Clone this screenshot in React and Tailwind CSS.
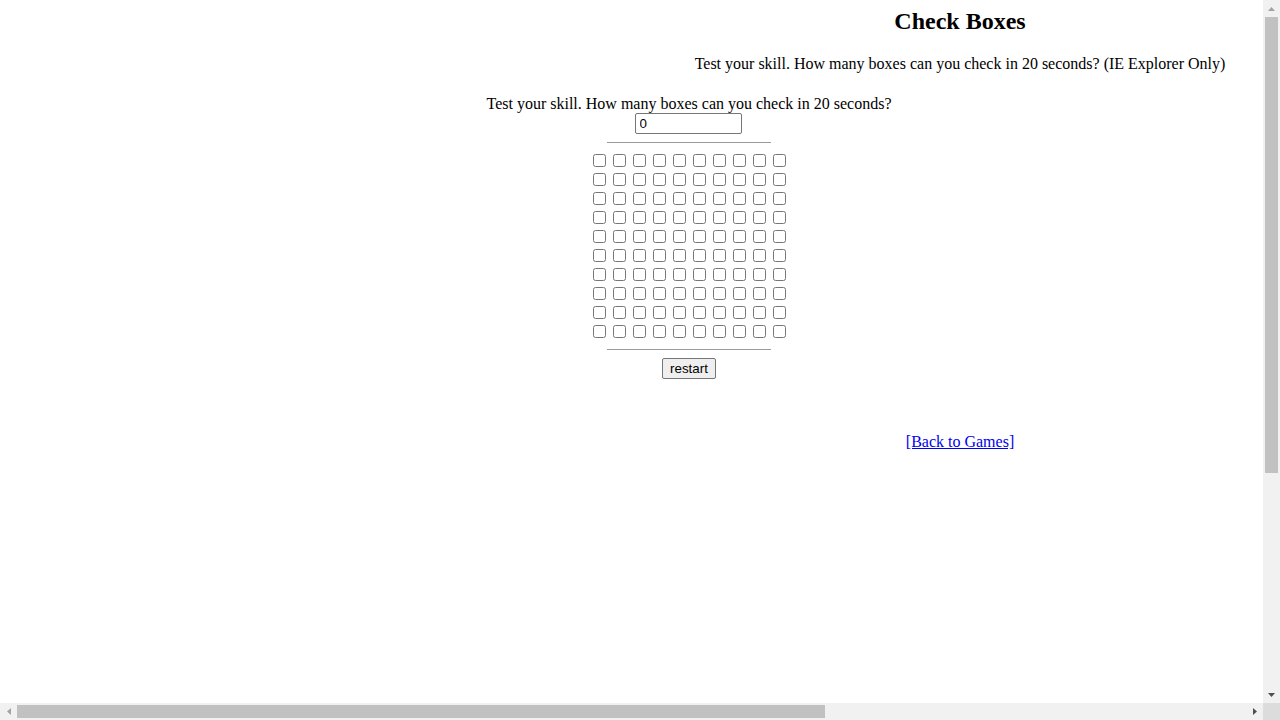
import React from "react";

const serif = { fontFamily: '"Liberation Serif", "Times New Roman", serif' };
const sans = { fontFamily: '"Liberation Sans", Arial, sans-serif' };

function Arrow({ dir, color }) {
  const pts = {
    up: "0,4 7,4 3.5,0",
    down: "0,0 7,0 3.5,4",
    left: "4,0 4,7 0,3.5",
    right: "0,0 0,7 4,3.5",
  }[dir];
  const w = dir === "up" || dir === "down" ? 7 : 4;
  const h = dir === "up" || dir === "down" ? 4 : 7;
  return (
    <svg width={w} height={h} viewBox={`0 0 ${w} ${h}`}>
      <polygon points={pts} fill={color} />
    </svg>
  );
}

export default function App() {
  const rows = Array.from({ length: 10 });
  const cols = Array.from({ length: 10 });
  return (
    <div className="w-[1280px] h-[720px] flex flex-col overflow-hidden bg-white">
      <div className="flex h-[703px]">
        <div className="w-[1263px] h-[703px] overflow-hidden">
          <div className="w-[1920px] text-black" style={serif}>
            <div className="pt-[8px]">
              <h2 className="text-center text-[24px] leading-[27px] font-bold">Check Boxes</h2>
            </div>
            <p className="mt-[19px] text-center text-[16px] leading-[19px]">
              Test your skill. How many boxes can you check in 20 seconds? (IE Explorer Only)
            </p>
            <div className="ml-[479px] w-[420px] mt-[21px] flex flex-col items-center">
              <p className="text-[16px] leading-[19px] whitespace-nowrap">
                Test your skill. How many boxes can you check in 20 seconds?
              </p>
              <input
                type="text"
                defaultValue="0"
                readOnly
                className="block mr-[2px] w-[107px] h-[21px] border border-[#767676] rounded-[2px] px-[4px] text-[13.33px] text-black bg-white"
                style={sans}
              />
              <div className="mt-[8px] w-[164px] border-t border-[#9a9a9a]" />
              <div className="mt-[8px] flex flex-col">
                {rows.map((_, r) => (
                  <div key={r} className="flex h-[19px] items-center">
                    {cols.map((_, c) => (
                      <input
                        key={c}
                        type="checkbox"
                        className="w-[13px] h-[13px] ml-[4px] mr-[3px] my-[3px]"
                      />
                    ))}
                  </div>
                ))}
              </div>
              <div className="mt-[8px] w-[164px] border-t border-[#9a9a9a]" />
              <button
                className="mt-[8px] h-[21px] w-[54px] bg-[#efefef] border border-[#767676] rounded-[2px] text-[13.33px] leading-[16px] text-black"
                style={sans}
              >
                restart
              </button>
            </div>
            <p className="mt-[53px] text-center text-[16px] leading-[19px]">
              <a href="#" className="text-[#0000ee] underline">[Back to Games]</a>
            </p>
          </div>
        </div>
        <div className="w-[17px] h-[703px] bg-[#f1f1f1] flex flex-col">
          <div className="h-[17px] flex items-center justify-center">
            <Arrow dir="up" color="#a3a3a3" />
          </div>
          <div className="flex-1 flex flex-col">
            <div className="mx-[2px] h-[456px] bg-[#c1c1c1]" />
          </div>
          <div className="h-[17px] flex items-center justify-center">
            <Arrow dir="down" color="#505050" />
          </div>
        </div>
      </div>
      <div className="flex h-[17px]">
        <div className="w-[1263px] h-[17px] bg-[#f1f1f1] flex items-center">
          <div className="w-[17px] h-[17px] flex items-center justify-center">
            <Arrow dir="left" color="#a3a3a3" />
          </div>
          <div className="flex-1 h-[17px] flex items-center">
            <div className="w-[808px] h-[13px] bg-[#c1c1c1]" />
          </div>
          <div className="w-[17px] h-[17px] flex items-center justify-center">
            <Arrow dir="right" color="#505050" />
          </div>
        </div>
        <div className="w-[17px] h-[17px] bg-[#dcdcdc]" />
      </div>
    </div>
  );
}
